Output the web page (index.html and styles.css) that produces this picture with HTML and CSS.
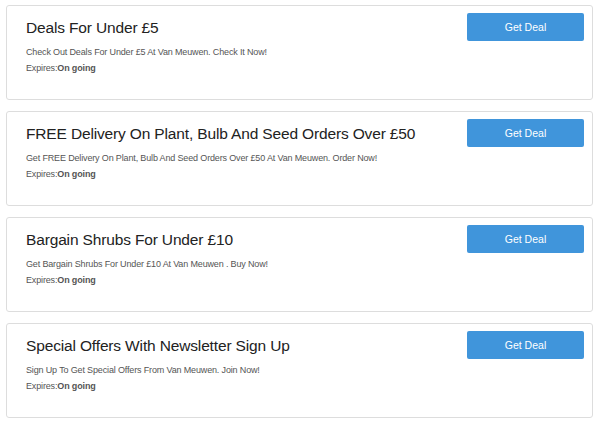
FILE: index.html
```html
<!DOCTYPE html>
<html lang="en">
<head>
  <meta charset="UTF-8">
  <title>Van Meuwen Deals</title>
  <link rel="stylesheet" href="styles.css">
</head>
<body>
  <div class="deal">
    <div class="deal-info">
      <h3>Deals For Under £5</h3>
      <p class="desc">Check Out Deals For Under £5 At Van Meuwen. Check It Now!</p>
      <p class="expires">Expires:<b>On going</b></p>
    </div>
    <button class="deal-btn">Get Deal</button>
  </div>
  <div class="deal">
    <div class="deal-info">
      <h3>FREE Delivery On Plant, Bulb And Seed Orders Over £50</h3>
      <p class="desc">Get FREE Delivery On Plant, Bulb And Seed Orders Over £50 At Van Meuwen. Order Now!</p>
      <p class="expires">Expires:<b>On going</b></p>
    </div>
    <button class="deal-btn">Get Deal</button>
  </div>
  <div class="deal">
    <div class="deal-info">
      <h3>Bargain Shrubs For Under £10</h3>
      <p class="desc">Get Bargain Shrubs For Under £10 At Van Meuwen . Buy Now!</p>
      <p class="expires">Expires:<b>On going</b></p>
    </div>
    <button class="deal-btn">Get Deal</button>
  </div>
  <div class="deal">
    <div class="deal-info">
      <h3>Special Offers With Newsletter Sign Up</h3>
      <p class="desc">Sign Up To Get Special Offers From Van Meuwen. Join Now!</p>
      <p class="expires">Expires:<b>On going</b></p>
    </div>
    <button class="deal-btn">Get Deal</button>
  </div>
</body>
</html>
```

FILE: styles.css
```css
body {
  font-family: 'Liberation Sans', Arial, sans-serif;
  background: #fff;
  margin: 5px 7px 0 6px;
}
.deal {
  display: flex;
  align-items: flex-start;
  height: 93px;
  border: 1px solid #ddd;
  border-radius: 3px;
  padding: 0 8px 0 19px;
  margin-bottom: 11px;
}
.deal-info {
  flex: 1;
  padding-top: 12px;
}
.deal-info h3 {
  margin: 0 0 6px;
  font-size: 15.5px;
  font-weight: normal;
  letter-spacing: -0.15px;
  line-height: 20px;
  color: #222;
}
.deal-info p {
  margin: 0;
  font-size: 9px;
  letter-spacing: -0.15px;
  line-height: 16px;
  color: #555;
}
.deal-btn {
  margin-top: 7px;
  width: 117px;
  height: 28px;
  border: none;
  border-radius: 2px;
  background: #4095db;
  color: #fff;
  font-family: inherit;
  font-size: 10.5px;
  cursor: pointer;
}
```
